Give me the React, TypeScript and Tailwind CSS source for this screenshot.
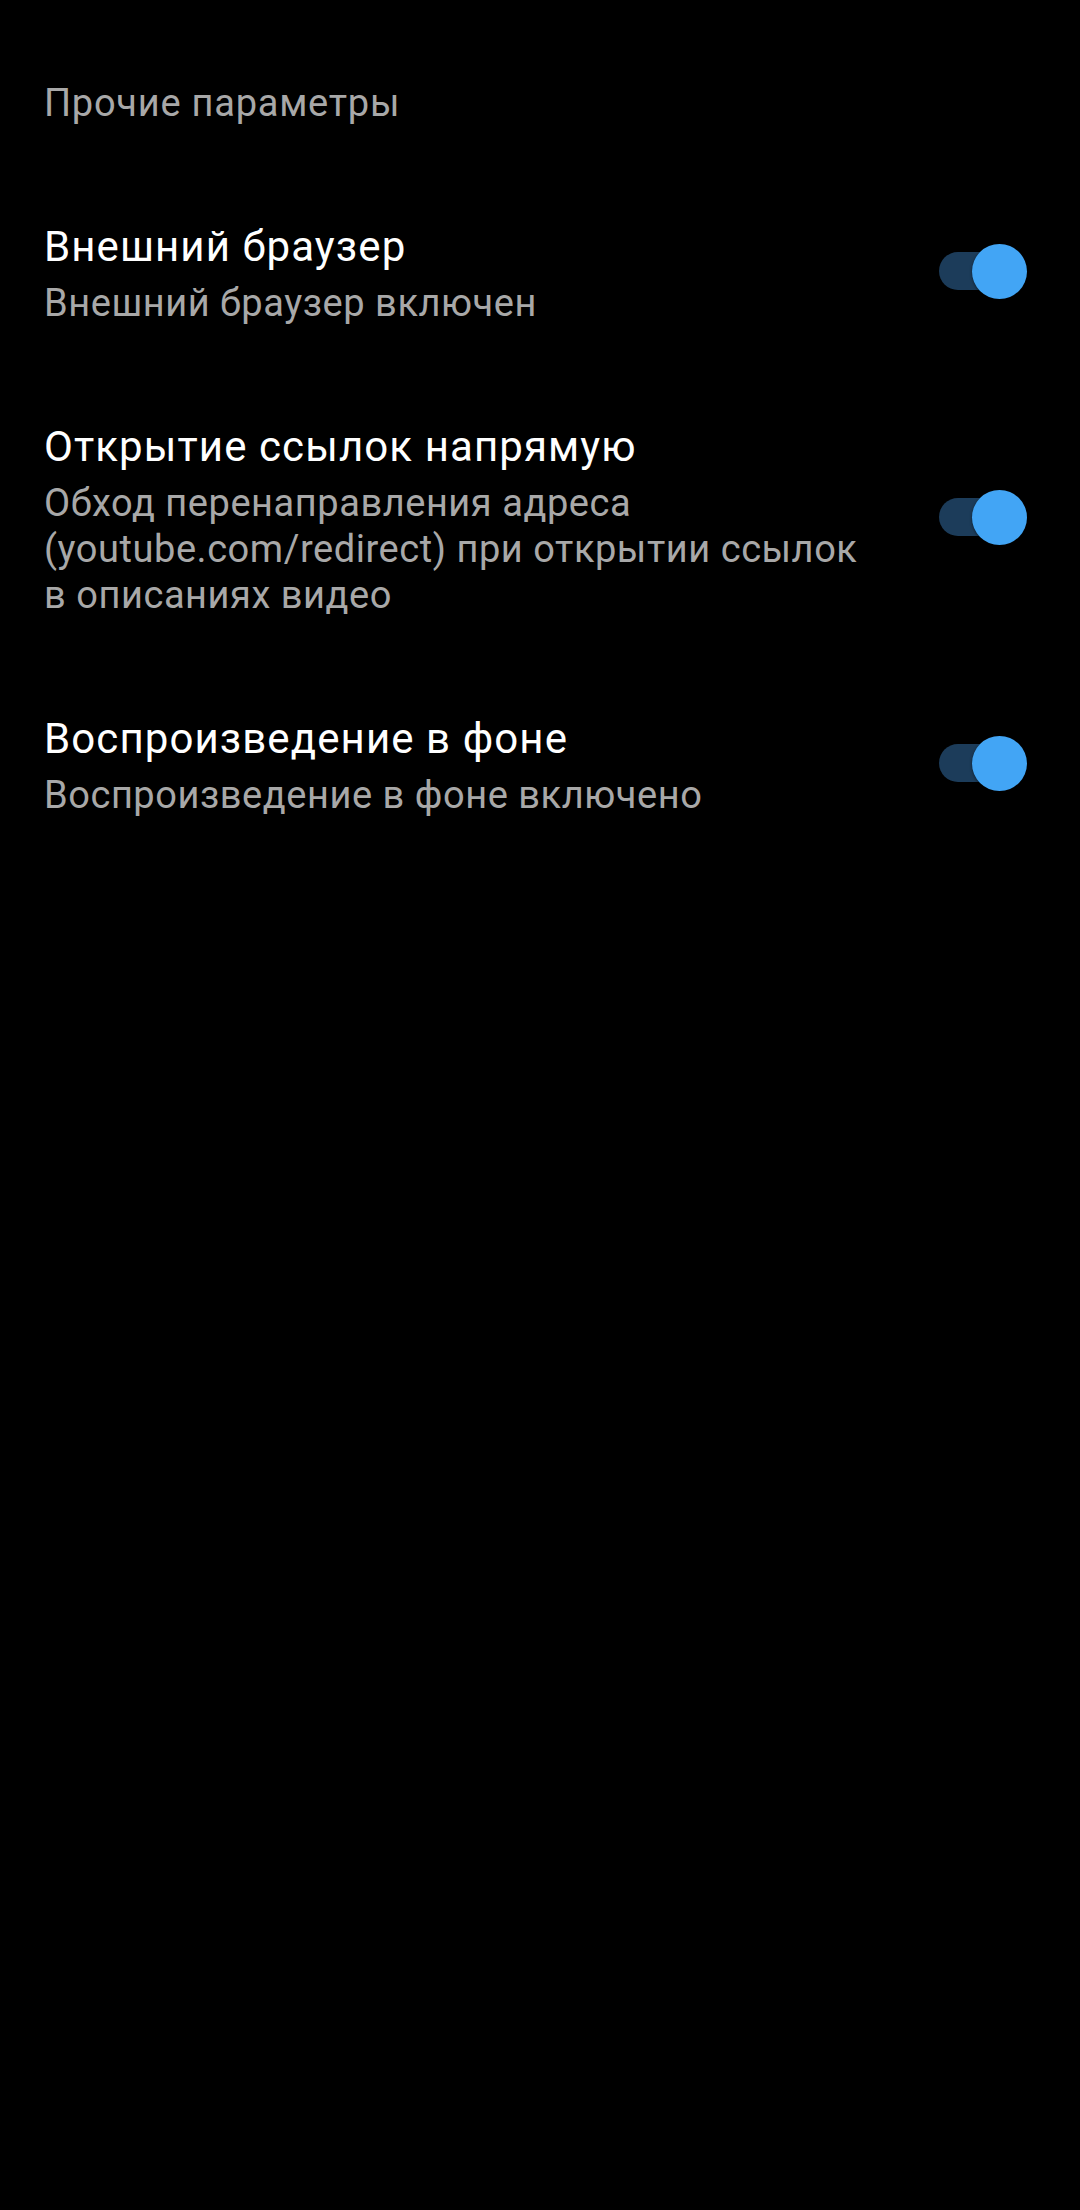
type Setting = {
  title: string;
  summary: string;
  enabled: boolean;
};

const settings: Setting[] = [
  {
    title: "Внешний браузер",
    summary: "Внешний браузер включен",
    enabled: true,
  },
  {
    title: "Открытие ссылок напрямую",
    summary:
      "Обход перенаправления адреса (youtube.com/redirect) при открытии ссылок в описаниях видео",
    enabled: true,
  },
  {
    title: "Воспроизведение в фоне",
    summary: "Воспроизведение в фоне включено",
    enabled: true,
  },
];

function Switch({ on }: { on: boolean }) {
  return (
    <div className="relative mb-[6px] flex h-[55px] w-[88px] shrink-0 items-center">
      <div
        className={
          on
            ? "h-[38px] w-[80px] rounded-full bg-[#1c3c5a]"
            : "h-[38px] w-[80px] rounded-full bg-[#3a3a3a]"
        }
      />
      <div
        className={
          on
            ? "absolute right-0 top-0 h-[55px] w-[55px] rounded-full bg-[#42a5f5] shadow-[0_1px_3px_rgba(0,0,0,0.5)]"
            : "absolute left-0 top-0 h-[55px] w-[55px] rounded-full bg-[#bdbdbd]"
        }
      />
    </div>
  );
}

function SettingRow({ setting }: { setting: Setting }) {
  return (
    <div className="flex items-center py-[48px] pl-[44px] pr-[53px]">
      <div className="mr-[75px] min-w-0 flex-1">
        <p className="text-[42px] leading-[50px] tracking-[1.1px] text-white">
          {setting.title}
        </p>
        <p className="mt-[8px] text-[38px] leading-[46px] tracking-[0.55px] text-[#a8a8a8]">
          {setting.summary}
        </p>
      </div>
      <Switch on={setting.enabled} />
    </div>
  );
}

export default function App() {
  return (
    <div className="min-h-screen bg-black pt-[81px] font-['Roboto',sans-serif]">
      <h2 className="mb-[49px] px-[44px] text-[38px] leading-[44px] tracking-[0.75px] text-[#a8a8a8]">
        Прочие параметры
      </h2>
      <div className="flex flex-col">
        {settings.map((s) => (
          <SettingRow key={s.title} setting={s} />
        ))}
      </div>
    </div>
  );
}
